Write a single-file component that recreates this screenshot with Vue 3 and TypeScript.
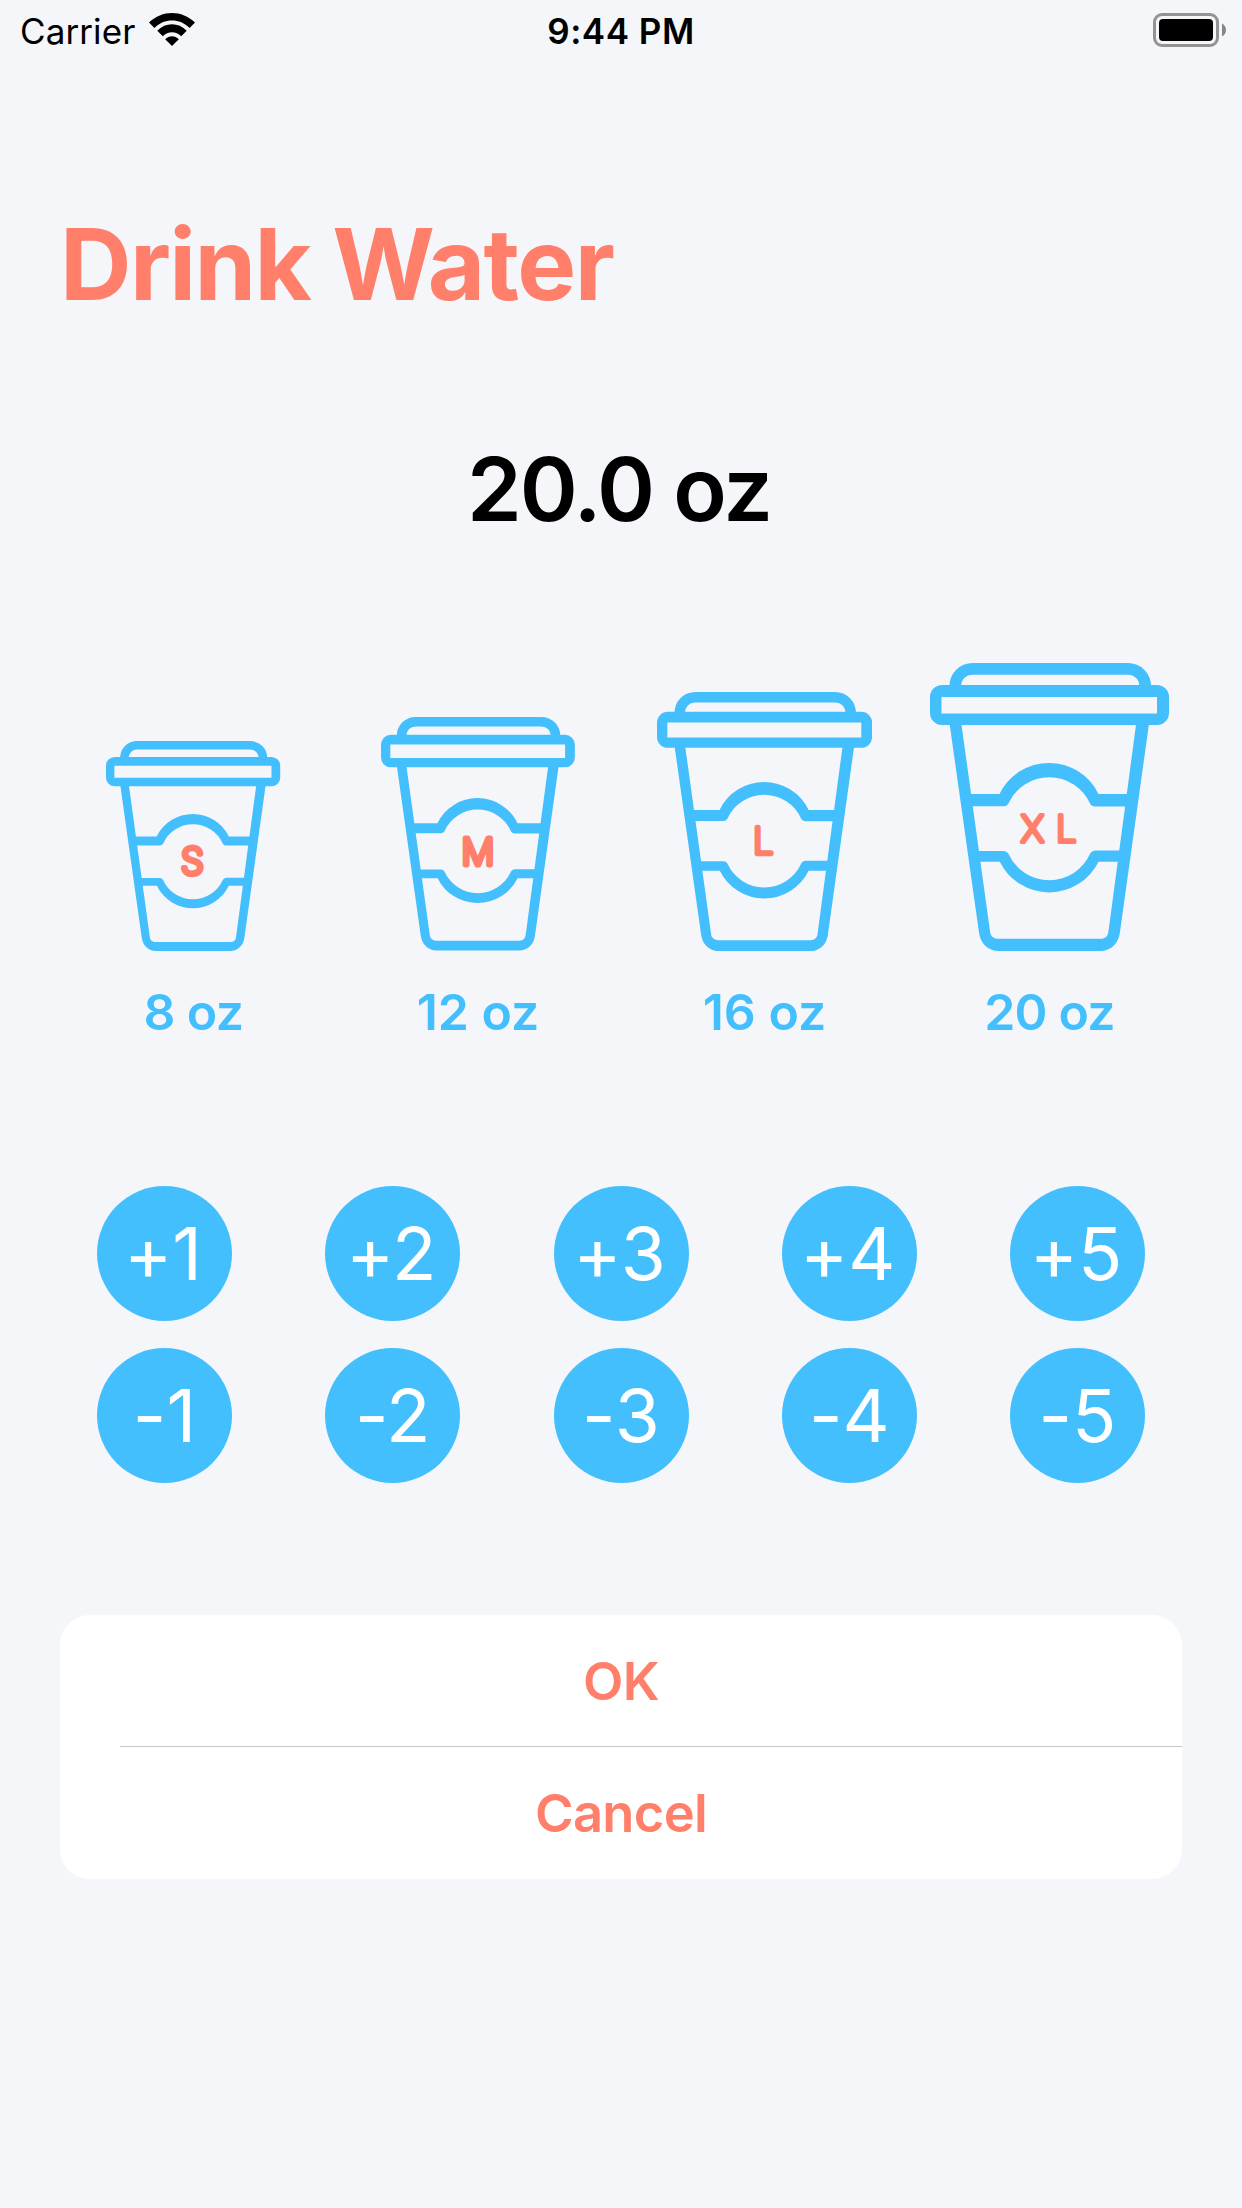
<script setup lang="ts">
interface Cup {
  size: string
  label: string
  scale: number
  spacing: number
  labelSpacing: number
  letterX: number
  letterY: number
  stroke: number
}

const cups: Cup[] = [
  { size: 'S', label: '8 oz', scale: 0.729, spacing: 0, labelSpacing: -0.6, letterX: 118.6, letterY: 164.8, stroke: 5.2 },
  { size: 'M', label: '12 oz', scale: 0.811, spacing: 0, labelSpacing: 0, letterX: 119.4, letterY: 166.2, stroke: 5.2 },
  { size: 'L', label: '16 oz', scale: 0.9, spacing: 0, labelSpacing: 0, letterX: 118, letterY: 165.8, stroke: 4.4 },
  { size: 'XL', label: '20 oz', scale: 1, spacing: 12, labelSpacing: -0.8, letterX: 124.7, letterY: 165.6, stroke: 4.2 },
]

const steps: string[] = ['+1', '+2', '+3', '+4', '+5', '-1', '-2', '-3', '-4', '-5']
const letterSize = 36.5
</script>

<template>
  <div class="screen">
    <header class="status">
      <div class="status-left">
        <span class="carrier">Carrier</span>
        <svg class="wifi" width="46" height="33" viewBox="0 0 46 33">
          <path d="M0 9.6C13-3.2 33-3.2 46 9.6L40.6 15C30.800 5.100 15.200 5.100 5.400 15Z" />
          <path d="M8.300 17.800C16.300 9.200 29.700 9.200 37.700 17.800L32.200 23.200C27 17.800 19 17.800 13.800 23.200Z" />
          <path d="M16.200 26.200C20 22.200 26 22.200 29.800 26.200L23 33Z" />
        </svg>
      </div>
      <span class="time">9:44 PM</span>
      <div class="status-right">
        <svg width="73" height="34" viewBox="0 0 73 34">
          <rect x="1.500" y="1.500" width="63" height="31" rx="7.500" fill="none" stroke="#929395" stroke-width="3" />
          <rect x="6" y="6" width="54" height="22" rx="4" fill="#000" />
          <path d="M69 10.500C71.600 12 73 14.400 73 17S71.600 22 69 23.500Z" fill="#858687" />
        </svg>
      </div>
    </header>

    <h1 class="title">Drink Water</h1>
    <div class="total">20.0 oz</div>

    <section class="cups">
      <div v-for="cup in cups" :key="cup.size" class="cup">
        <svg :width="239 * cup.scale" :height="288 * cup.scale" viewBox="0 0 239 288">
          <g fill="#44bffe">
            <path d="M25.200 24C25.200 13.500 32.500 5.900 43 5.900H197.500C208 5.900 215.300 13.500 215.300 24" fill="none" stroke="#44bffe" stroke-width="11.700" />
            <path fill-rule="evenodd" d="M12 22H227A12 12 0 0 1 239 34V50A12 12 0 0 1 227 62H12A12 12 0 0 1 0 50V34A12 12 0 0 1 12 22ZM11.500 34V50.500H227V34Z" />
            <path fill-rule="evenodd" d="M19.200 58L49 269.500C50.200 280 58 288 68.500 288H170.500C181 288 188.800 280 189.900 269.500L219.400 58ZM31 58H206.500L178.300 269.500C177.800 273.300 175 275.800 171 275.800H68C64 275.800 60.600 273.300 60.200 269.500Z" />
            <path d="M36 131H69.500A55 55 0 0 1 168.500 131H202.500V143.500H165Q161.500 143.500 160.200 140.800A44.800 44.800 0 0 0 78.300 140.800Q76.500 143.300 74 143.300H36Z" />
            <path d="M43 188H74Q76.500 188 78.300 190.600A44.800 44.800 0 0 0 160.200 190.600Q161.500 188 165 187.600H196V198.700H168.500A55 55 0 0 1 69.800 198.700H43Z" />
          </g>
          <text
            class="cup-size"
            :x="cup.letterX"
            :y="cup.letterY + (letterSize * 0.3636) / cup.scale"
            :font-size="letterSize / cup.scale"
            :stroke-width="cup.stroke / cup.scale"
            :letter-spacing="cup.spacing"
          >{{ cup.size }}</text>
        </svg>
        <span class="cup-label" :style="{ letterSpacing: cup.labelSpacing + 'px' }">{{ cup.label }}</span>
      </div>
    </section>

    <section class="steps">
      <button v-for="step in steps" :key="step" class="step" :class="{ plus: step.startsWith('+') }">{{ step }}</button>
    </section>

    <section class="actions">
      <button class="action">OK</button>
      <div class="divider"></div>
      <button class="action">Cancel</button>
    </section>
  </div>
</template>

<style>
body {
  margin: 0;
  background: #f5f6fa;
}
</style>

<style scoped>
.screen {
  box-sizing: border-box;
  width: 1242px;
  height: 2208px;
  background: #f5f6fa;
  font-family: Inter, "Liberation Sans", sans-serif;
  color: #000;
  overflow: hidden;
}
button {
  box-sizing: border-box;
  margin: 0;
  padding: 0;
  border: 0;
  font-family: inherit;
}
.status {
  display: grid;
  grid-template-columns: 1fr auto 1fr;
  height: 60px;
  padding: 0 16px 0 20px;
  line-height: 63px;
  font-size: 35px;
}
.status-left {
  display: flex;
  align-items: flex-start;
}
.carrier {
  width: 129px;
  letter-spacing: 0.1px;
}
.wifi {
  margin-top: 13px;
}
.time {
  margin: 0 4px 0 0;
  font-weight: 600;
  letter-spacing: 0.5px;
}
.status-right {
  display: flex;
  justify-content: flex-end;
  padding-top: 13px;
}
.title {
  margin: 144px 0 0 60px;
  font-size: 99px;
  font-weight: 700;
  line-height: 120px;
  letter-spacing: -1.600px;
  color: #ff7f6b;
}
.total {
  margin-top: 105px;
  padding-right: 4px;
  font-size: 88px;
  font-weight: 600;
  line-height: 121px;
  height: 120px;
  letter-spacing: -2px;
  text-align: center;
}
.cups {
  display: grid;
  grid-template-columns: 285px 284px 289px 281px;
  margin: 101px 0 0 51px;
  height: 401px;
  align-items: end;
}
.cup {
  display: flex;
  flex-direction: column;
  align-items: center;
}
.cup svg {
  display: block;
}
.cup-size {
  font-weight: 200;
  fill: #ff7f6b;
  stroke: #ff7f6b;
  stroke-linejoin: round;
  text-anchor: middle;
}
.cup-label {
  margin-top: 31px;
  height: 60px;
  padding-bottom: 9px;
  font-size: 50px;
  font-weight: 600;
  line-height: 60px;
  color: #44bffe;
}
.steps {
  display: grid;
  grid-template-columns: repeat(5, 135px);
  justify-content: space-between;
  row-gap: 27px;
  margin: 135px 97px 0;
}
.step {
  width: 135px;
  height: 135px;
  border-radius: 50%;
  background: #44bffe;
  color: #fff;
  font-size: 73px;
  font-weight: 380;
  font-feature-settings: "calt" 0;
  line-height: 135px;
  text-align: center;
}
.step.plus {
  padding-right: 3px;
}
.actions {
  margin: 132px 60px 0;
  height: 264px;
  border-radius: 30px;
  background: #fff;
  overflow: hidden;
}
.action {
  display: block;
  width: 100%;
  height: 131px;
  background: transparent;
  color: #ff7f6b;
  font-size: 52.500px;
  font-weight: 600;
  letter-spacing: -0.700px;
  line-height: 133px;
}
.divider {
  height: 1px;
  margin-left: 60px;
  background: #c6c6c8;
}
</style>
